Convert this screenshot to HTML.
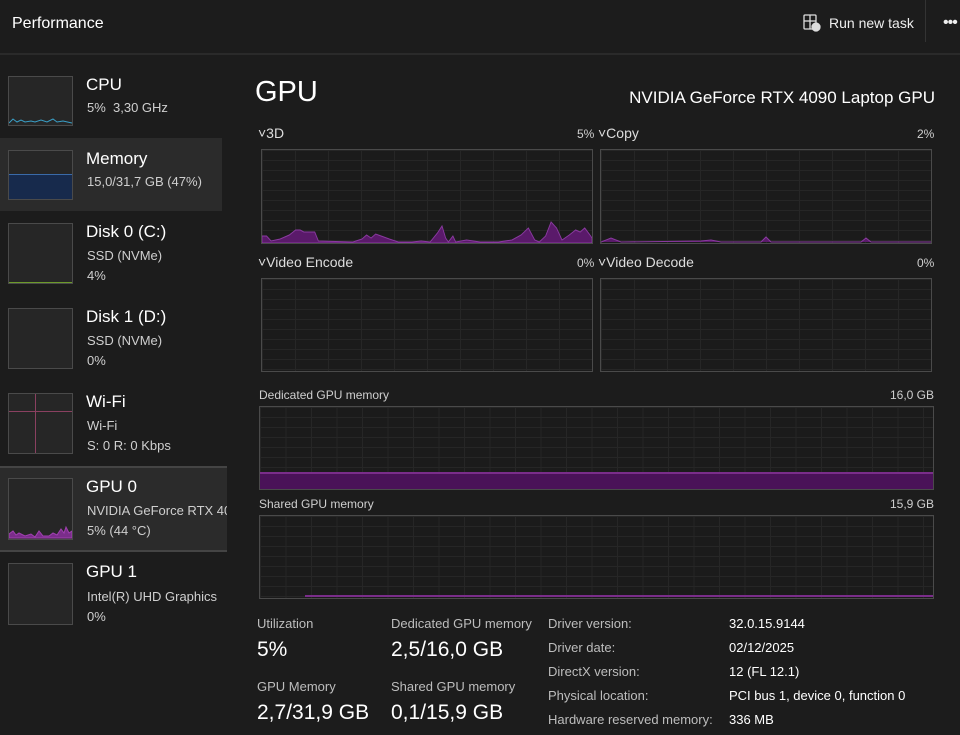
<!DOCTYPE html><html><head><style>
body{margin:0;width:960px;height:735px;background:#1c1c1c;font-family:"Liberation Sans",sans-serif;color:#fff;position:relative;overflow:hidden}
.a{position:absolute;white-space:nowrap}
.th{position:absolute;left:8px;width:65px;border:1px solid #4a4a4a;background:#262626;box-sizing:border-box}
.t1{font-size:17px;color:#fff}
.t2{font-size:13px;color:#cfcfcf}
.g{position:absolute;border:1px solid #4a4a4a;box-sizing:border-box;background-color:#1b1b1b;background-image:linear-gradient(#262626 1px,transparent 1px),linear-gradient(90deg,#262626 1px,transparent 1px);background-size:100% 10px,33px 100%}
.lab{font-size:14px;color:#ddd}
.sm{font-size:12px;color:#cfcfcf}
.sl{font-size:13px;color:#bdbdbd}
.sv{font-size:21px;color:#fff}
.dl{font-size:13px;color:#bdbdbd}
.dv{font-size:13px;color:#fff}
</style></head><body>
<div class="a" style="left:12px;top:15px;font-size:16px">Performance</div>
<div class="a" style="left:0;top:53px;width:960px;height:2px;background:#2a2a2a"></div>
<svg class="a" style="left:802px;top:13px" width="20" height="20" viewBox="0 0 20 20" fill="none" stroke="#ddd" stroke-width="1.3"><rect x="2" y="2" width="12" height="14" rx="1"/><line x1="8" y1="2" x2="8" y2="16"/><line x1="2" y1="8" x2="14" y2="8"/><circle cx="14" cy="14" r="4" fill="#ddd"/></svg>
<div class="a" style="left:829px;top:15px;font-size:14px;color:#eee">Run new task</div>
<div class="a" style="left:925px;top:0;width:1px;height:42px;background:#333"></div>
<div class="a" style="left:943px;top:14px;font-size:16px;color:#eee;letter-spacing:-1px">•••</div>

<div class="a" style="left:0;top:138px;width:222px;height:73px;background:#2b2b2b"></div>
<div class="a" style="left:0;top:466px;width:227px;height:86px;background:#2b2b2b;border-top:2px solid #444;border-bottom:2px solid #444;box-sizing:border-box"></div>

<div class="th" style="top:76px;height:50px"><svg width="63" height="48" style="position:absolute;left:0;top:0"><polyline points="0,46 4,42 8,45 12,43 16,45 22,44 26,45 32,43 38,45 44,42 48,45 54,44 63,46" fill="none" stroke="#3aa0c8" stroke-width="1"/></svg></div>
<div class="a t1" style="left:86px;top:75px">CPU</div><div class="a t2" style="left:87px;top:100px">5%&nbsp; 3,30 GHz</div>

<div class="th" style="top:150px;height:50px"><div style="position:absolute;left:0;right:0;bottom:0;height:24px;background:#172a4c;border-top:1px solid #3a6aa8"></div></div>
<div class="a t1" style="left:86px;top:149px">Memory</div><div class="a t2" style="left:87px;top:174px">15,0/31,7 GB (47%)</div>

<div class="th" style="top:223px;height:61px"><div style="position:absolute;left:0;right:0;bottom:0;height:1px;background:#6c9a2a"></div></div>
<div class="a t1" style="left:86px;top:222px">Disk 0 (C:)</div><div class="a t2" style="left:87px;top:248px">SSD (NVMe)</div><div class="a t2" style="left:87px;top:268px">4%</div>

<div class="th" style="top:308px;height:61px"></div>
<div class="a t1" style="left:86px;top:307px">Disk 1 (D:)</div><div class="a t2" style="left:87px;top:333px">SSD (NVMe)</div><div class="a t2" style="left:87px;top:353px">0%</div>

<div class="th" style="top:393px;height:61px"><div style="position:absolute;left:26px;top:0;bottom:0;width:1px;background:#8a4060"></div><div style="position:absolute;left:0;right:0;top:17px;height:1px;background:#8a4060"></div></div>
<div class="a t1" style="left:86px;top:392px">Wi-Fi</div><div class="a t2" style="left:87px;top:418px">Wi-Fi</div><div class="a t2" style="left:87px;top:438px">S: 0 R: 0 Kbps</div>

<div class="th" style="top:478px;height:62px"><svg width="63" height="60" style="position:absolute;left:0;top:0"><polygon points="0,59 0,55 4,52 7,56 10,54 16,57 22,55 26,58 30,52 34,57 40,57 44,54 48,56 52,50 55,54 57,48 60,54 63,52 63,59" fill="#7a2d8a" stroke="#a040b0" stroke-width="1"/></svg></div>
<div class="a t1" style="left:86px;top:477px">GPU 0</div><div class="a t2" style="left:87px;top:503px;width:140px;overflow:hidden">NVIDIA GeForce RTX 40</div><div class="a t2" style="left:87px;top:523px">5% (44 °C)</div>

<div class="th" style="top:563px;height:62px"></div>
<div class="a t1" style="left:86px;top:562px">GPU 1</div><div class="a t2" style="left:87px;top:589px">Intel(R) UHD Graphics</div><div class="a t2" style="left:87px;top:609px">0%</div>

<div class="a" style="left:255px;top:76px;font-size:29px">GPU</div>
<div class="a" style="right:25px;top:88px;font-size:17px">NVIDIA GeForce RTX 4090 Laptop GPU</div>

<div class="a lab" style="left:258px;top:125px">˅3D</div><div class="a sm" style="left:577px;top:127px">5%</div>
<div class="a lab" style="left:598px;top:125px">˅Copy</div><div class="a sm" style="left:917px;top:127px">2%</div>
<div class="g" style="left:261px;top:149px;width:332px;height:95px"><svg width="330" height="93" viewBox="0 0 363 93" preserveAspectRatio="none" style="position:absolute;left:0;top:0"><polygon points="0,93 0,86 5,86 10,91 20,89 30,85 37,80 42,80 46,82 58,82 62,91 100,92 110,89 115,85 120,88 125,84 131,86 140,89 150,92 165,92 175,91 185,92 193,83 198,76 202,88 205,92 210,86 213,92 225,90 240,92 260,92 275,90 285,85 293,78 300,90 305,92 312,86 318,72 324,78 330,90 338,85 345,80 350,82 355,78 360,84 363,88 363,93" fill="#5a1a6a" stroke="#8a3aa0" stroke-width="1"/></svg></div>
<div class="g" style="left:600px;top:149px;width:332px;height:95px"><svg width="330" height="93" style="position:absolute;left:0;top:0"><polyline points="0,92 10,88 20,92 100,91 110,90 120,92 160,92 165,87 170,92 260,92 265,88 270,92 330,92" fill="#5a1a6a" stroke="#8a3aa0" stroke-width="1"/></svg></div>
<div class="a lab" style="left:258px;top:254px">˅Video Encode</div><div class="a sm" style="left:577px;top:256px">0%</div>
<div class="a lab" style="left:598px;top:254px">˅Video Decode</div><div class="a sm" style="left:917px;top:256px">0%</div>
<div class="g" style="left:261px;top:278px;width:332px;height:94px"></div>
<div class="g" style="left:600px;top:278px;width:332px;height:94px"></div>

<div class="a sm" style="left:259px;top:388px">Dedicated GPU memory</div><div class="a sm" style="right:26px;top:388px">16,0 GB</div>
<div class="g" style="left:259px;top:406px;width:675px;height:84px;background-size:100% 10px,25.5px 100%"><div style="position:absolute;left:0;right:0;bottom:0;height:15px;background:#4a1258;border-top:2px solid #7a2d8a"></div></div>
<div class="a sm" style="left:259px;top:497px">Shared GPU memory</div><div class="a sm" style="right:26px;top:497px">15,9 GB</div>
<div class="g" style="left:259px;top:515px;width:675px;height:84px;background-size:100% 10px,25.5px 100%"><div style="position:absolute;left:45px;right:0;bottom:1px;height:2px;background:#7a2d8a"></div></div>

<div class="a sl" style="left:257px;top:616px">Utilization</div><div class="a sv" style="left:257px;top:638px">5%</div>
<div class="a sl" style="left:257px;top:679px">GPU Memory</div><div class="a sv" style="left:257px;top:701px">2,7/31,9 GB</div>
<div class="a sl" style="left:391px;top:616px">Dedicated GPU memory</div><div class="a sv" style="left:391px;top:638px">2,5/16,0 GB</div>
<div class="a sl" style="left:391px;top:679px">Shared GPU memory</div><div class="a sv" style="left:391px;top:701px">0,1/15,9 GB</div>
<div class="a dl" style="left:548px;top:616px">Driver version:</div><div class="a dv" style="left:729px;top:616px">32.0.15.9144</div>
<div class="a dl" style="left:548px;top:640px">Driver date:</div><div class="a dv" style="left:729px;top:640px">02/12/2025</div>
<div class="a dl" style="left:548px;top:664px">DirectX version:</div><div class="a dv" style="left:729px;top:664px">12 (FL 12.1)</div>
<div class="a dl" style="left:548px;top:688px">Physical location:</div><div class="a dv" style="left:729px;top:688px">PCI bus 1, device 0, function 0</div>
<div class="a dl" style="left:548px;top:712px">Hardware reserved memory:</div><div class="a dv" style="left:729px;top:712px">336 MB</div>
</body></html>
